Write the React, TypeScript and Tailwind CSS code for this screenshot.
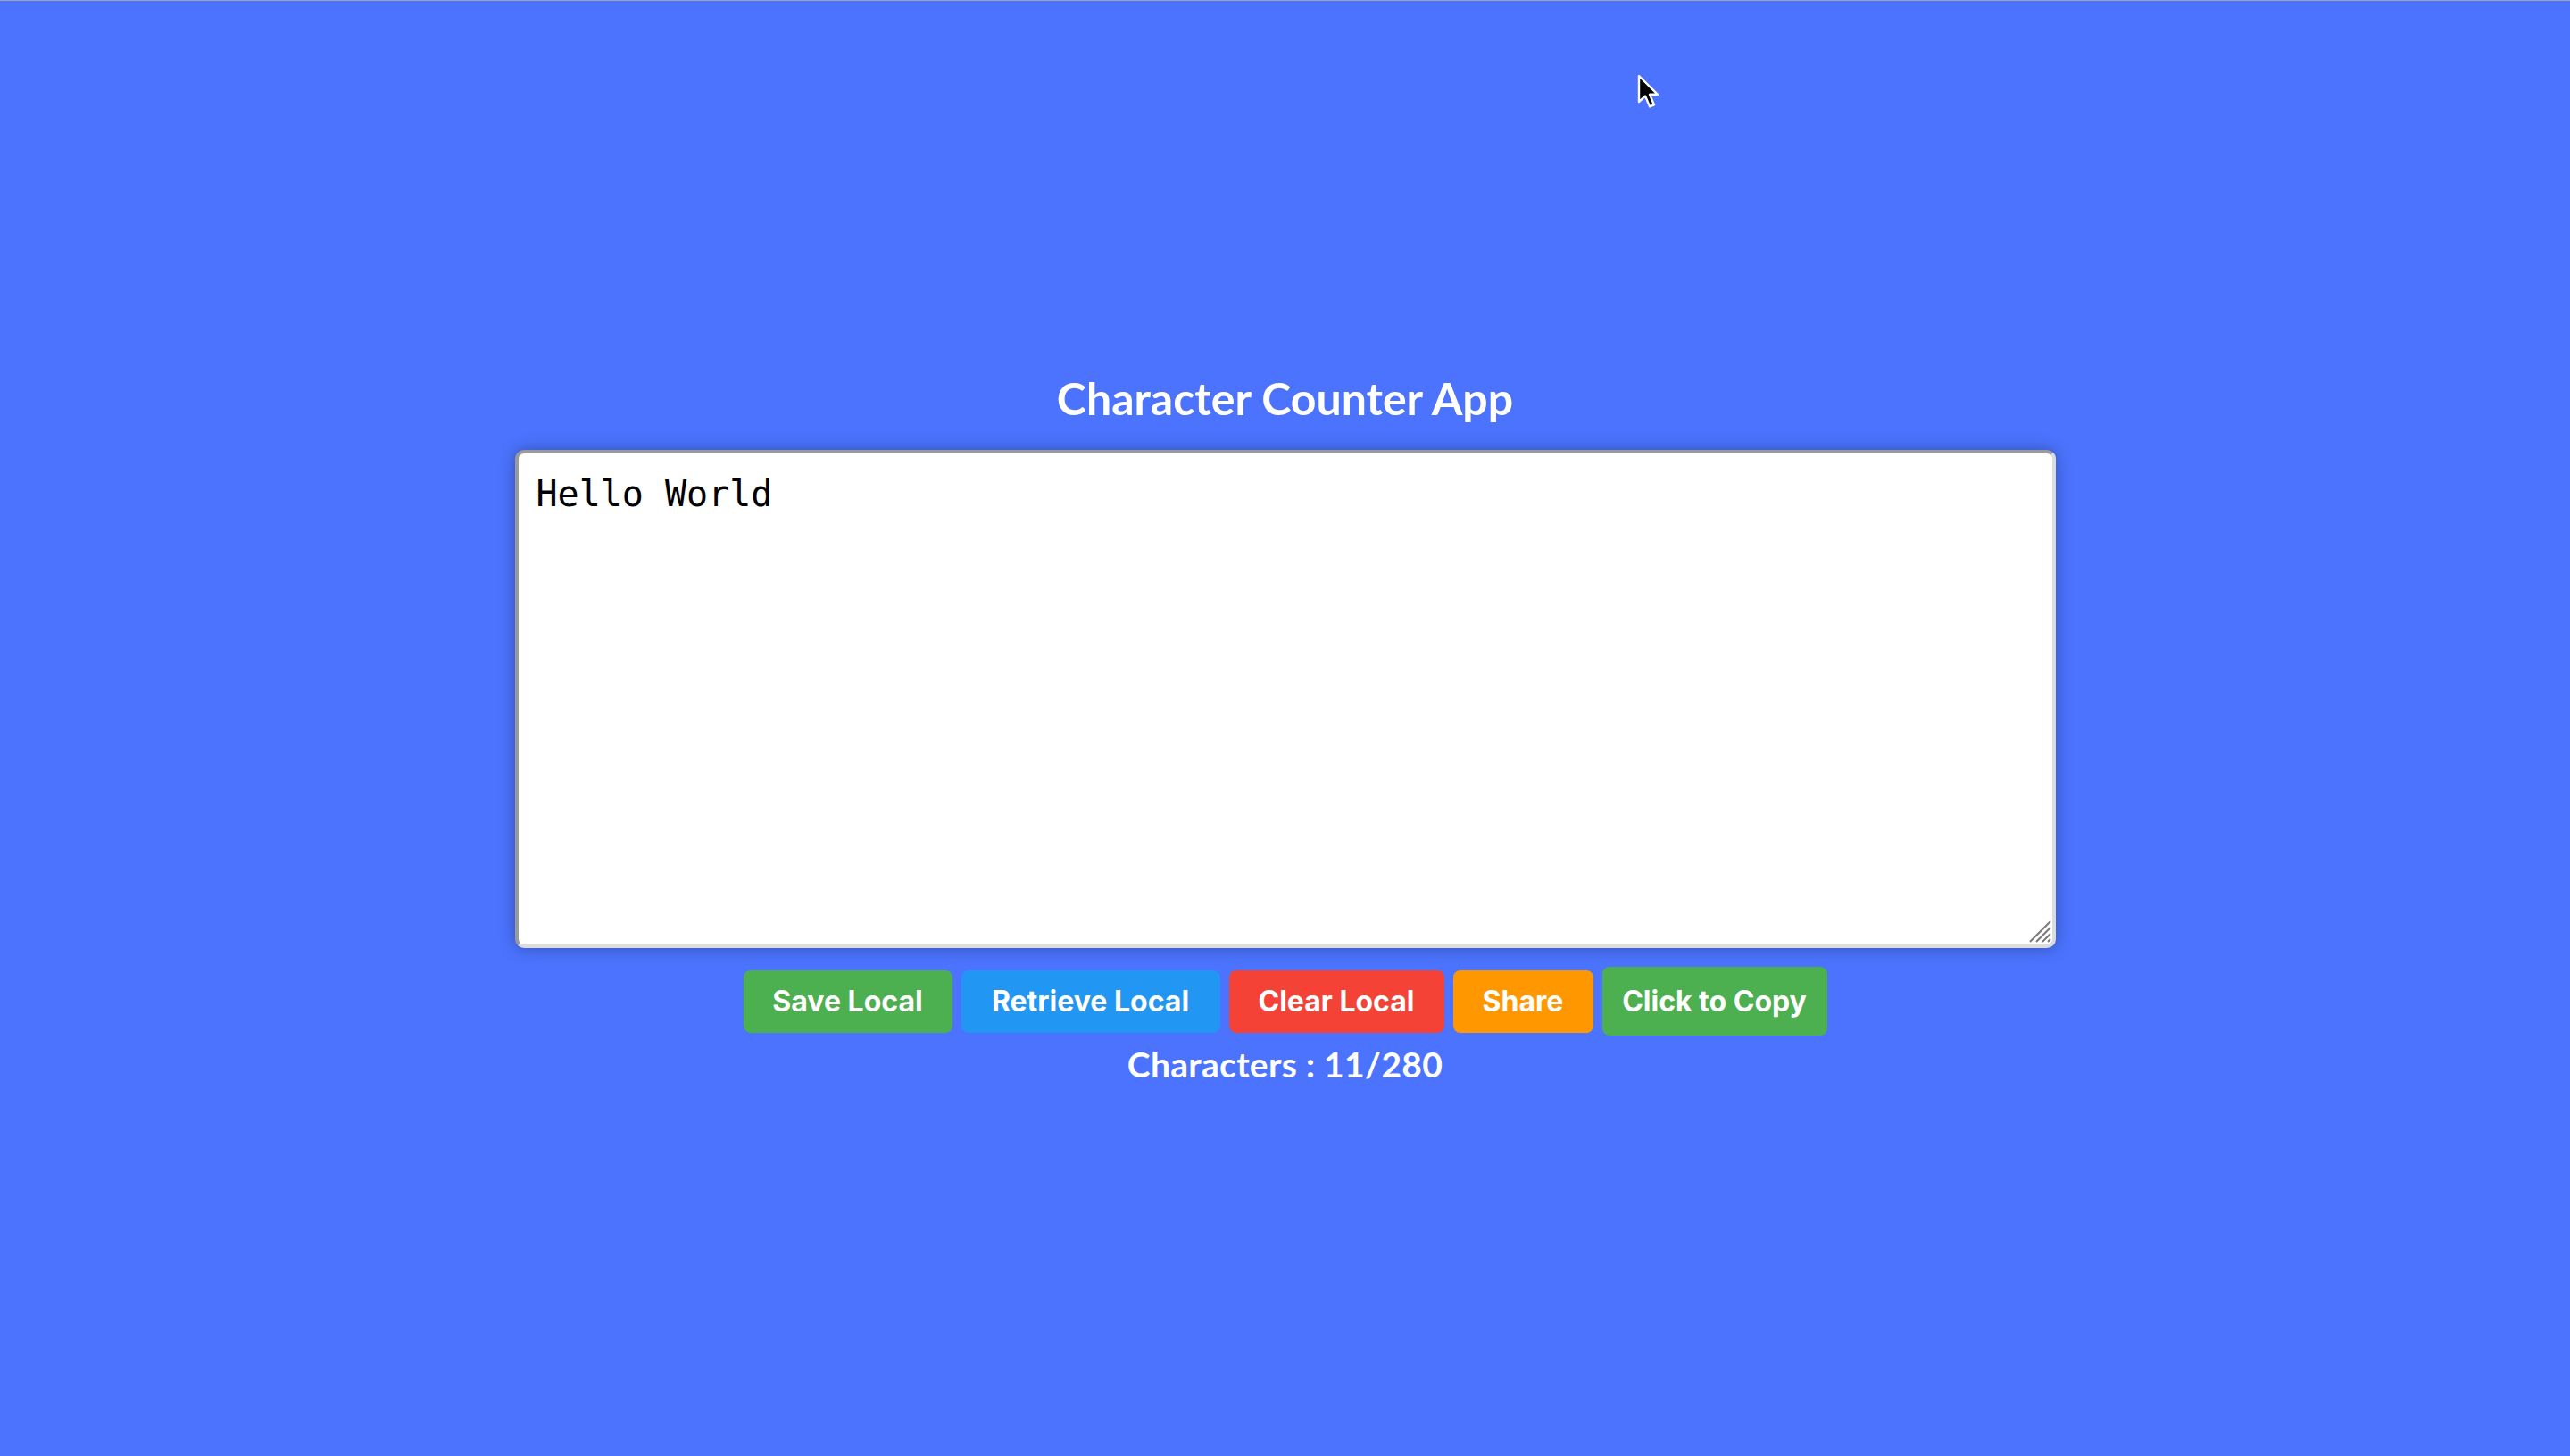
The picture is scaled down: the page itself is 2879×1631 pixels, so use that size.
import React, { useState } from 'react';

const MAX = 280;

const App = () => {
  const [text, setText] = useState('Hello World');

  return (
    <div className="relative min-h-screen w-full bg-[#4b73fd] border-t border-[#a3a3b0] flex flex-col items-center pt-[415px]">
      {/* Mouse pointer from the screenshot */}
      <svg className="absolute left-[1833px] top-[82px]" width="28" height="40" viewBox="0 0 14 20">
        <path d="M1.5 1 L1.5 15.5 L5 12.3 L7.6 18.2 L10 17.2 L7.5 11.4 L12 11.4 Z" fill="#000" stroke="#fff" strokeWidth="1.2" strokeLinejoin="round" />
      </svg>

      <h1 className="text-[50px] leading-[60px] font-bold text-white font-['Lato',sans-serif]">
        Character Counter App
      </h1>

      {/* Text box */}
      <div className="relative mt-[28px]">
        <textarea
          className="block w-[1726px] h-[558px] bg-white rounded-[10px] border-4 border-t-[#9a9a9a] border-l-[#9a9a9a] border-r-[#dcdcdc] border-b-[#dcdcdc] shadow-[0_0_18px_rgba(0,0,0,0.3)] px-[20px] pt-[15px] pb-[20px] text-[40px] text-black font-['DejaVu_Sans_Mono',monospace] resize-none focus:outline-none"
          value={text}
          maxLength={MAX}
          onChange={(e) => setText(e.target.value)}
        />
        {/* resize grip */}
        <svg className="absolute right-[5px] bottom-[6px]" width="26" height="26" viewBox="0 0 26 26">
          <path d="M2 25 L25 2 M9 25 L25 9 M16 25 L25 16 M22 25 L25 22" stroke="#7a7a7a" strokeWidth="2" />
        </svg>
      </div>

      {/* Buttons */}
      <div className="mt-[21px] flex items-center gap-[10px] font-['Inter',sans-serif] font-bold text-[32px] text-white">
        <button className="h-[70px] w-[234px] rounded-[8px] bg-[#4caf50]">Save Local</button>
        <button className="h-[70px] w-[290px] rounded-[8px] bg-[#2196f3]">Retrieve Local</button>
        <button className="h-[70px] w-[241px] rounded-[8px] bg-[#f44336]">Clear Local</button>
        <button className="h-[70px] w-[157px] rounded-[8px] bg-[#ff9800]">Share</button>
        <button className="h-[77px] w-[252px] rounded-[8px] bg-[#4caf50]">Click to Copy</button>
      </div>

      <p className="mt-[8px] text-[39px] leading-[48px] font-bold text-white font-['Lato',sans-serif] tracking-[0.3px]">
        Characters : {text.length}/{MAX}
      </p>
    </div>
  );
};

export default App;
